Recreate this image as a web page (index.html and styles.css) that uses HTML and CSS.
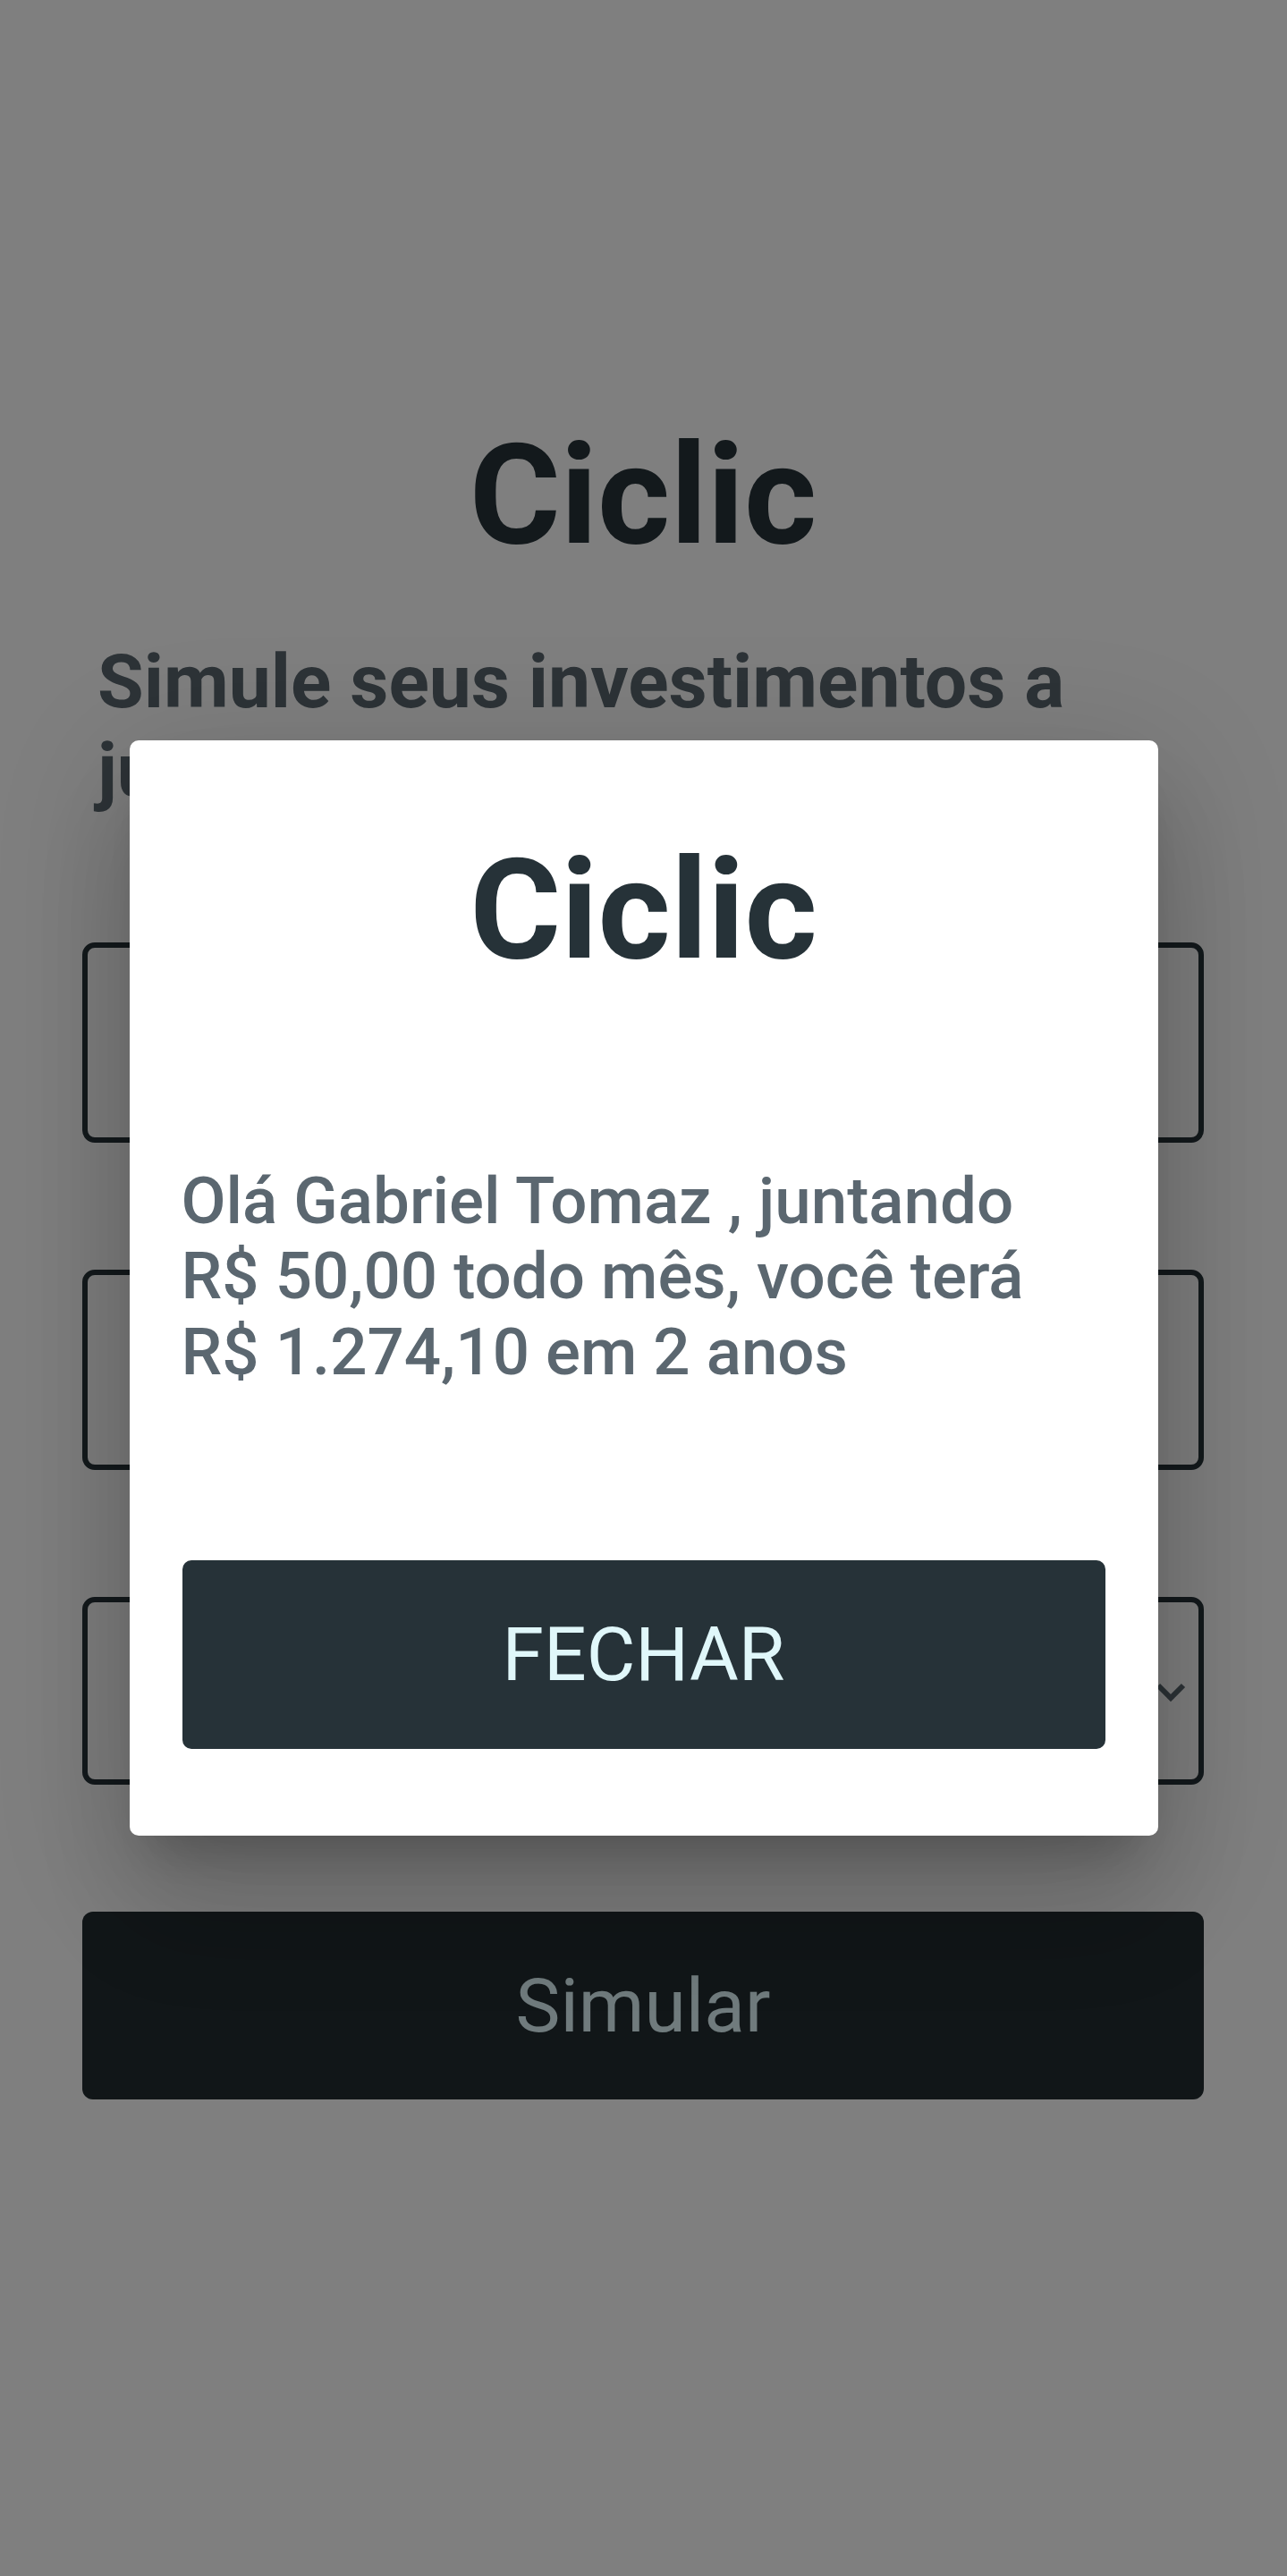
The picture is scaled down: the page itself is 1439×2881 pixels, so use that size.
FILE: index.html
```html
<!DOCTYPE html>
<html lang="pt-BR">
<head>
<meta charset="utf-8">
<title>Ciclic</title>
<link rel="stylesheet" href="styles.css">
</head>
<body>
<main class="page">
  <h1 class="brand">Ciclic</h1>
  <h2 class="subtitle">Simule seus investimentos a juros compostos</h2>
  <form class="form">
    <div class="field field-tall"><span class="field-value">Gabriel Tomaz</span></div>
    <div class="field field-tall"><span class="field-value">50,00</span></div>
    <div class="field field-select">
      <span class="field-value">2 anos</span>
      <svg class="chevron" width="34" height="22" viewBox="0 0 34 22"><polyline points="3,3 17,17 31,3" fill="none" stroke="#5a666e" stroke-width="6"/></svg>
    </div>
    <div class="btn-simular">Simular</div>
  </form>
</main>
<div class="backdrop">
  <div class="modal">
    <h2 class="modal-title">Ciclic</h2>
    <p class="modal-text">Olá Gabriel Tomaz , juntando R$ 50,00 todo mês, você terá R$ 1.274,10 em 2 anos</p>
    <div class="btn-fechar">FECHAR</div>
  </div>
</div>
</body>
</html>
```
FILE: styles.css
```css
html, body {
  margin: 0;
  padding: 0;
  background: #ffffff;
  font-family: Roboto, "Noto Sans", "Liberation Sans", sans-serif;
}
.page {
  width: 1439px;
  height: 2881px;
  box-sizing: border-box;
  padding: 462px 93px 0 92px;
}
.brand {
  margin: 0;
  font-size: 156px;
  font-weight: 700;
  line-height: normal;
  text-align: center;
  color: #263238;
}
.subtitle {
  margin: 68px 18px 0 17px;
  font-size: 84px;
  font-weight: 700;
  line-height: normal;
  color: #5a666e;
}
.form {
  margin-top: 143px;
  display: flex;
  flex-direction: column;
  gap: 142px;
}
.field {
  box-sizing: border-box;
  border: 6px solid #263238;
  border-radius: 14px;
  display: flex;
  align-items: center;
  padding: 0 44px;
  font-size: 72px;
  color: #263238;
}
.field-tall { height: 224px; }
.field-select {
  height: 210px;
  justify-content: space-between;
  padding-right: 14px;
}
.chevron { display: block; margin-top: 4px; }
.btn-simular {
  height: 210px;
  border-radius: 12px;
  background: #222c30;
  color: #e0f7fa;
  font-size: 84px;
  display: flex;
  align-items: center;
  justify-content: center;
}
.backdrop {
  position: fixed;
  inset: 0;
  background: rgba(0, 0, 0, 0.5);
  display: flex;
  align-items: center;
  justify-content: center;
}
.modal {
  width: 1150px;
  box-sizing: border-box;
  background: #ffffff;
  border-radius: 10px;
  padding: 98px 59px 97px 59px;
  box-shadow: 0 38px 52px -24px rgba(0,0,0,0.2), 0 84px 133px 10px rgba(0,0,0,0.14), 0 31px 161px 28px rgba(0,0,0,0.12);
}
.modal-title {
  margin: 0;
  font-size: 156px;
  font-weight: 700;
  line-height: normal;
  text-align: center;
  color: #263238;
}
.modal-text {
  margin: 193px 0 0 -1px;
  width: 980px;
  font-size: 72.7px;
  font-weight: 500;
  line-height: 84.4px;
  color: #5b6770;
}
.btn-fechar {
  margin-top: 190px;
  height: 211px;
  border-radius: 10px;
  background: #263238;
  color: #e0f7fa;
  font-size: 84px;
  display: flex;
  align-items: center;
  justify-content: center;
}
```
